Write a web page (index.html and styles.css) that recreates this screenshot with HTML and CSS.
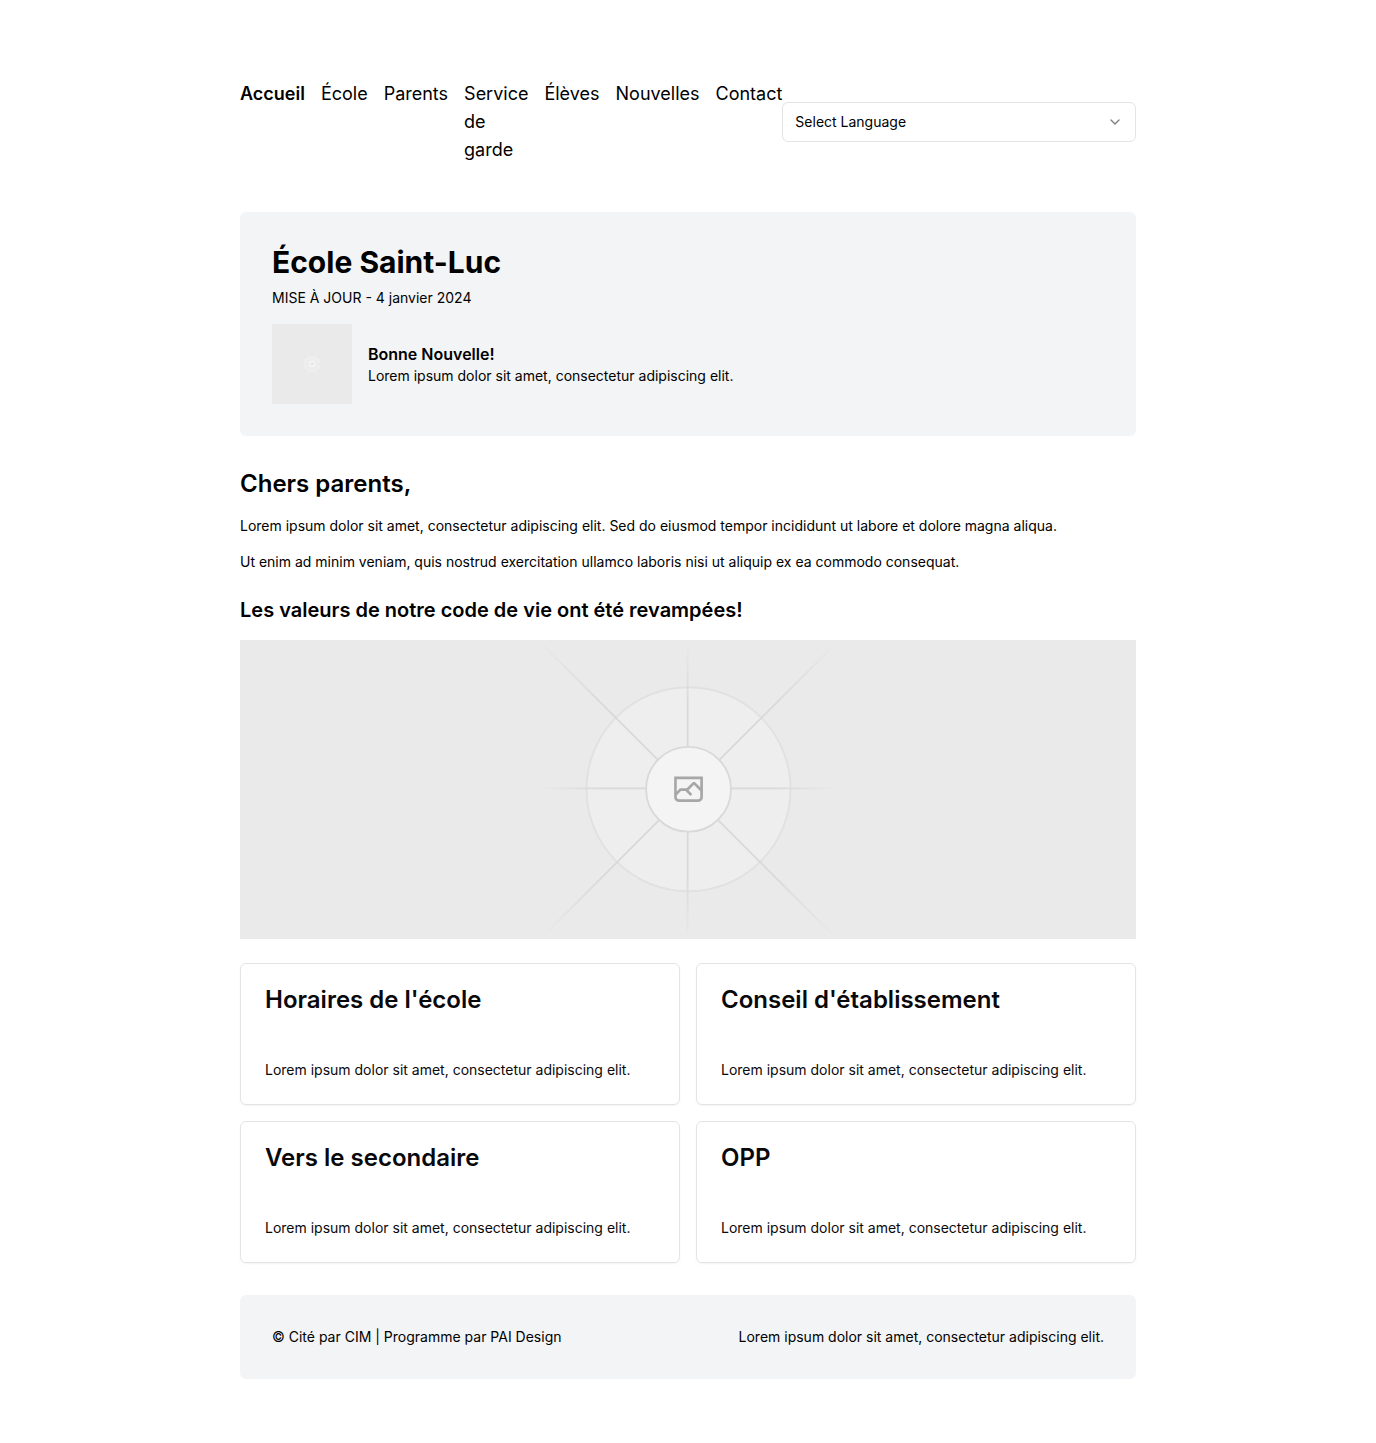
FILE: index.html
```html
<!DOCTYPE html>
<html lang="fr">
<head>
<meta charset="utf-8">
<meta name="viewport" content="width=device-width, initial-scale=1">
<title>École Saint-Luc</title>
<link rel="stylesheet" href="styles.css">
</head>
<body>
<svg class="defs" width="0" height="0" aria-hidden="true">
  <defs>
    <linearGradient id="ray-a" x1="554.061" x2="-.48" y1=".083" y2=".087" gradientUnits="userSpaceOnUse"><stop stop-color="#c9c9c9" stop-opacity="0"/><stop offset=".208" stop-color="#c9c9c9"/><stop offset=".792" stop-color="#c9c9c9"/><stop offset="1" stop-color="#c9c9c9" stop-opacity="0"/></linearGradient>
    <linearGradient id="ray-b" x1="796.912" x2="404.507" y1="599.963" y2="599.965" gradientUnits="userSpaceOnUse"><stop stop-color="#c9c9c9" stop-opacity="0"/><stop offset=".208" stop-color="#c9c9c9"/><stop offset=".792" stop-color="#c9c9c9"/><stop offset="1" stop-color="#c9c9c9" stop-opacity="0"/></linearGradient>
    <linearGradient id="ray-c" x1="600.792" x2="600.794" y1="403.677" y2="796.082" gradientUnits="userSpaceOnUse"><stop stop-color="#c9c9c9" stop-opacity="0"/><stop offset=".208" stop-color="#c9c9c9"/><stop offset=".792" stop-color="#c9c9c9"/><stop offset="1" stop-color="#c9c9c9" stop-opacity="0"/></linearGradient>
    <linearGradient id="ray-d" x1="404.85" x2="796.972" y1="403.903" y2="796.02" gradientUnits="userSpaceOnUse"><stop stop-color="#c9c9c9" stop-opacity="0"/><stop offset=".208" stop-color="#c9c9c9"/><stop offset=".792" stop-color="#c9c9c9"/><stop offset="1" stop-color="#c9c9c9" stop-opacity="0"/></linearGradient>
    <clipPath id="icon-box"><path d="M581.364 580.535h38.689v38.689h-38.689z"/></clipPath>
    <g id="placeholder" fill="none" opacity=".5" stroke-width="2.418">
      <circle cx="600.709" cy="599.88" r="136.62" fill="#fafafa" stroke="#c9c9c9" opacity=".5"/>
      <path stroke="url(#ray-a)" d="M0-1.209h553.581" transform="scale(1 -1) rotate(45 1163.11 91.165)"/>
      <path stroke="url(#ray-b)" d="M404.846 598.671h391.726"/>
      <path stroke="url(#ray-c)" d="M599.5 795.742V404.017"/>
      <path stroke="url(#ray-d)" d="m795.717 796.597-391.441-391.44"/>
      <circle cx="600.709" cy="599.88" r="56.825" fill="#fff" stroke="#c9c9c9"/>
      <g clip-path="url(#icon-box)"><path fill="#666" fill-rule="evenodd" d="M616.426 586.58h-31.434v16.176l3.553-3.554.531-.531h9.068l.074-.074 8.463-8.463h2.565l7.18 7.181V586.58Zm-15.715 14.654 3.698 3.699 1.283 1.282-2.565 2.565-1.282-1.283-5.2-5.199h-6.066l-5.514 5.514-.073.073v2.876a2.418 2.418 0 0 0 2.418 2.418h26.598a2.418 2.418 0 0 0 2.418-2.418v-8.317l-8.463-8.463-7.181 7.181-.071.072Zm-19.347 5.442v4.085a6.045 6.045 0 0 0 6.046 6.045h26.598a6.044 6.044 0 0 0 6.045-6.045v-7.108l1.356-1.355-1.282-1.283-.074-.073v-17.989h-38.689v23.43l-.146.146.146.147Z"/></g>
    </g>
  </defs>
</svg>
<div class="page">
  <header class="header">
    <nav class="nav">
      <a class="nav-link current" href="#" aria-current="page">Accueil</a>
      <a class="nav-link" href="#">École</a>
      <a class="nav-link" href="#">Parents</a>
      <a class="nav-link" href="#">Service de garde</a>
      <a class="nav-link" href="#">Élèves</a>
      <a class="nav-link" href="#">Nouvelles</a>
      <a class="nav-link" href="#">Contact</a>
    </nav>
    <div class="language">
      <select class="language-select" aria-label="Select Language">
        <option>Select Language</option>
      </select>
      <svg class="chevron" width="16" height="16" viewBox="0 0 24 24" fill="none" stroke="currentColor" stroke-width="2" stroke-linecap="round" stroke-linejoin="round" aria-hidden="true"><path d="m6 9 6 6 6-6"/></svg>
    </div>
  </header>
  <main>
    <section class="panel hero">
      <h1 class="hero-title">École Saint-Luc</h1>
      <p class="hero-date">MISE À JOUR - 4 janvier 2024</p>
      <div class="news">
        <svg class="news-image" viewBox="0 0 1200 1200" aria-hidden="true"><use href="#placeholder"/></svg>
        <div>
          <h2 class="news-title">Bonne Nouvelle!</h2>
          <p>Lorem ipsum dolor sit amet, consectetur adipiscing elit.</p>
        </div>
      </div>
    </section>
    <section class="letter">
      <h2 class="letter-title">Chers parents,</h2>
      <p>Lorem ipsum dolor sit amet, consectetur adipiscing elit. Sed do eiusmod tempor incididunt ut labore et dolore magna aliqua.</p>
      <p>Ut enim ad minim veniam, quis nostrud exercitation ullamco laboris nisi ut aliquip ex ea commodo consequat.</p>
      <h3 class="values-title">Les valeurs de notre code de vie ont été revampées!</h3>
      <svg class="banner" viewBox="0 400 1200 400" aria-hidden="true"><use href="#placeholder"/></svg>
    </section>
    <section class="cards">
      <article class="card">
        <h3 class="card-title">Horaires de l'école</h3>
        <p>Lorem ipsum dolor sit amet, consectetur adipiscing elit.</p>
      </article>
      <article class="card">
        <h3 class="card-title">Conseil d'établissement</h3>
        <p>Lorem ipsum dolor sit amet, consectetur adipiscing elit.</p>
      </article>
      <article class="card">
        <h3 class="card-title">Vers le secondaire</h3>
        <p>Lorem ipsum dolor sit amet, consectetur adipiscing elit.</p>
      </article>
      <article class="card">
        <h3 class="card-title">OPP</h3>
        <p>Lorem ipsum dolor sit amet, consectetur adipiscing elit.</p>
      </article>
    </section>
  </main>
  <footer class="panel footer">
    <p>© Cité par CIM | Programme par PAI Design</p>
    <p>Lorem ipsum dolor sit amet, consectetur adipiscing elit.</p>
  </footer>
</div>
</body>
</html>
```

FILE: styles.css
```css
*,
*::before,
*::after {
  box-sizing: border-box;
}

body {
  margin: 0;
  background: #fff;
  color: #000;
  font-family: Inter, "Liberation Sans", sans-serif;
  font-size: 14px;
  line-height: 20px;
}

h1,
h2,
h3,
p {
  margin: 0;
}

.defs {
  display: block;
}

.page {
  max-width: 960px;
  margin: 0 auto;
  padding: 80px 32px 64px;
}

.header {
  display: flex;
  align-items: center;
  margin-bottom: 48px;
}

.nav {
  display: flex;
  flex: none;
  gap: 16px;
  width: min-content;
  font-size: 18px;
  line-height: 28px;
}

.nav-link {
  color: inherit;
  text-decoration: none;
}

.nav-link.current {
  font-weight: 600;
}

.language {
  display: grid;
  flex: 1;
  align-items: center;
}

.language-select {
  grid-area: 1 / 1;
  width: 100%;
  height: 40px;
  padding: 0 12px;
  border: 1px solid #e4e4e7;
  border-radius: 6px;
  appearance: none;
  background: #fff;
  color: inherit;
  font: inherit;
}

.chevron {
  grid-area: 1 / 1;
  justify-self: end;
  margin-right: 13px;
  opacity: 0.5;
  pointer-events: none;
}

.panel {
  padding: 32px;
  border-radius: 6px;
  background: #f3f4f6;
}

.hero {
  margin-bottom: 32px;
}

.hero-title {
  margin-bottom: 8px;
  font-size: 30px;
  font-weight: 700;
  line-height: 36px;
}

.hero-date {
  margin-bottom: 16px;
}

.news {
  display: flex;
  align-items: center;
  gap: 16px;
}

.news-image {
  flex: none;
  width: 80px;
  height: 80px;
  background: #eaeaea;
}

.news-title {
  font-size: 16px;
  font-weight: 600;
  line-height: 24px;
}

.letter {
  display: grid;
  gap: 16px;
  margin-bottom: 24px;
}

.letter-title {
  font-size: 24px;
  font-weight: 600;
  line-height: 32px;
}

.values-title {
  margin-top: 8px;
  font-size: 20px;
  font-weight: 600;
  line-height: 28px;
}

.banner {
  display: block;
  width: 100%;
  aspect-ratio: 3 / 1;
  background: #eaeaea;
}

.cards {
  display: grid;
  grid-template-columns: repeat(2, 1fr);
  gap: 16px;
  margin-bottom: 32px;
}

.card {
  padding: 24px;
  border: 1px solid #e4e4e7;
  border-radius: 6px;
  box-shadow: 0 1px 2px rgba(0, 0, 0, 0.05);
  color: #09090b;
}

.card-title {
  margin-bottom: 48px;
  font-size: 24px;
  font-weight: 600;
  line-height: 24px;
}

.footer {
  display: flex;
  justify-content: space-between;
  gap: 16px;
}

@media (max-width: 800px) {
  .header,
  .nav,
  .footer {
    flex-wrap: wrap;
  }

  .nav {
    width: auto;
    flex: auto;
  }

  .cards {
    grid-template-columns: 1fr;
  }
}
```
